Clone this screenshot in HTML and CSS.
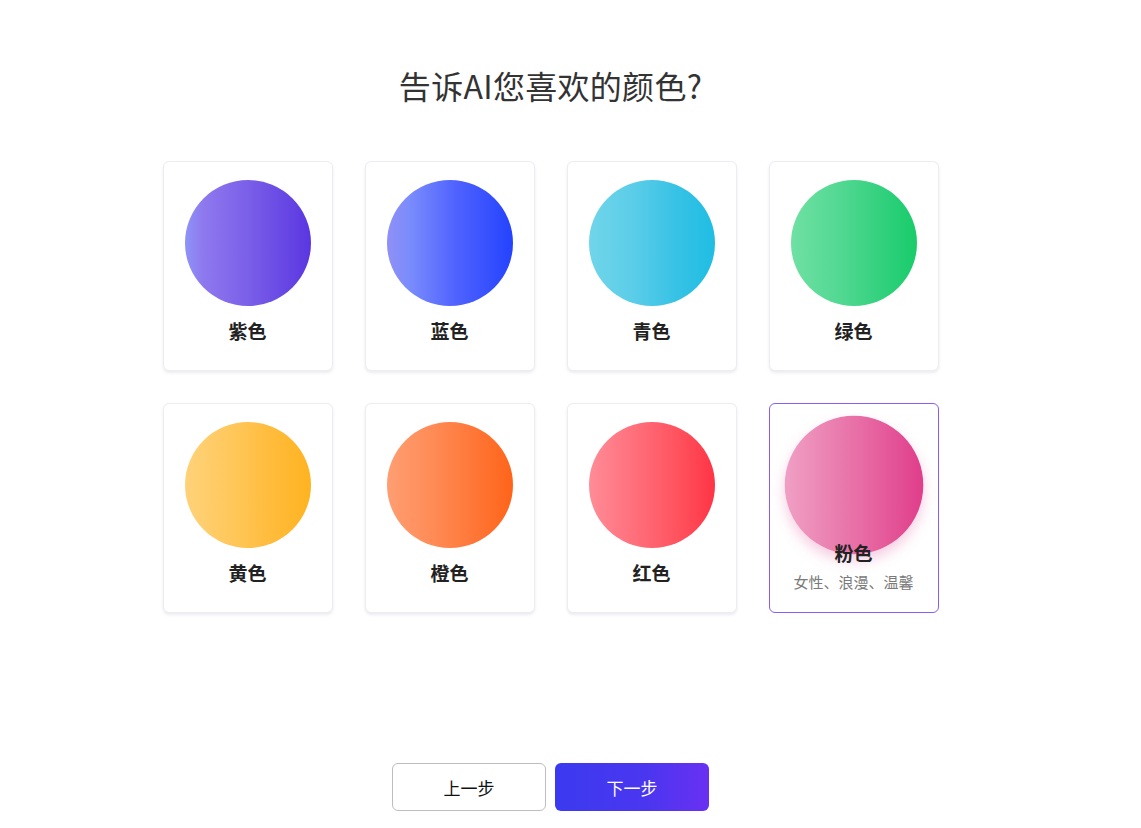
FILE: index.html
```html
<!DOCTYPE html>
<html lang="zh-CN">
<head>
<meta charset="utf-8">
<title>告诉AI您喜欢的颜色?</title>
<link rel="stylesheet" href="styles.css">
</head>
<body>
<div class="page">
  <h1 class="title">告诉AI您喜欢的颜色?</h1>
  <div class="grid">
    <div class="card"><div class="swatch purple"></div><div class="label">紫色</div></div>
    <div class="card"><div class="swatch blue"></div><div class="label">蓝色</div></div>
    <div class="card"><div class="swatch cyan"></div><div class="label">青色</div></div>
    <div class="card"><div class="swatch green"></div><div class="label">绿色</div></div>
    <div class="card"><div class="swatch yellow"></div><div class="label">黄色</div></div>
    <div class="card"><div class="swatch orange"></div><div class="label">橙色</div></div>
    <div class="card"><div class="swatch red"></div><div class="label">红色</div></div>
    <div class="card active"><div class="swatch pink"></div><div class="label">粉色</div><div class="desc">女性、浪漫、温馨</div></div>
  </div>
  <div class="actions">
    <button class="btn prev">上一步</button>
    <button class="btn next">下一步</button>
  </div>
</div>
</body>
</html>
```
FILE: styles.css
```css
* { box-sizing: border-box; }
html, body { margin: 0; padding: 0; background: #fff; }
body {
  font-family: "Noto Sans CJK SC", "Noto Sans", "Liberation Sans", sans-serif;
  color: #222;
}
.page {
  width: 1101px;
  display: flex;
  flex-direction: column;
  align-items: center;
}
.title {
  margin: 63px 0 0;
  font-size: 32px;
  line-height: 44px;
  font-weight: 400;
  color: #333;
  letter-spacing: 0.3px;
}
.grid {
  margin-top: 54px;
  display: grid;
  grid-template-columns: repeat(4, 170px);
  column-gap: 32px;
  row-gap: 32px;
}
.card {
  height: 210px;
  border: 1px solid #ececf2;
  border-radius: 6px;
  box-shadow: 0 2px 3px rgba(200, 200, 215, 0.35);
  background: #fff;
  display: flex;
  flex-direction: column;
  align-items: center;
  padding-top: 18px;
}
.swatch {
  width: 126px;
  height: 126px;
  border-radius: 50%;
  flex: none;
}
.label {
  margin-top: 12px;
  font-size: 19px;
  line-height: 26px;
  font-weight: 700;
  color: #222;
  position: relative;
  z-index: 1;
}
.desc {
  margin-top: 6px;
  font-size: 15px;
  line-height: 20px;
  color: #7a7a7a;
}
.card.active {
  border-color: #8a5cf0;
  box-shadow: none;
}
.card.active .swatch {
  transform: scale(1.1);
  box-shadow: 0 6px 12px rgba(225, 110, 170, 0.35);
}
.card.active .label { margin-top: -8px; }

.purple { background: linear-gradient(90deg, #8e93f8 0%, #8e78ee 15%, #7a5fe8 50%, #5a36e1 100%); }
.blue   { background: linear-gradient(90deg, #9090f6 0%, #7a8cfc 18%, #4f62fe 55%, #2443ff 100%); }
.cyan   { background: linear-gradient(90deg, #70d5ea 0%, #5bcde8 35%, #36c2e5 70%, #20bde3 100%); }
.green  { background: linear-gradient(90deg, #6fe0a3 0%, #55d994 35%, #34d17f 70%, #18cc6a 100%); }
.yellow { background: linear-gradient(90deg, #ffd279 0%, #ffc85d 35%, #ffbb3a 70%, #ffb320 100%); }
.orange { background: linear-gradient(90deg, #ff9e72 0%, #ff8c57 35%, #ff7636 70%, #ff6419 100%); }
.red    { background: linear-gradient(90deg, #ff8c97 0%, #ff707c 35%, #ff535f 70%, #ff3445 100%); }
.pink   { background: linear-gradient(90deg, #f0a0c4 0%, #ea7fb0 35%, #e6629f 65%, #e03d8a 100%); }

.actions {
  margin-top: 150px;
  display: flex;
  gap: 9px;
}
.btn {
  width: 154px;
  height: 48px;
  border-radius: 6px;
  font-family: "Noto Sans CJK SC", "Noto Sans", sans-serif;
  font-size: 17px;
  cursor: pointer;
}
.btn.prev {
  background: #fff;
  border: 1px solid #bdbdbd;
  color: #111;
}
.btn.next {
  border: none;
  color: #fff;
  background: linear-gradient(90deg, #3b3af0 0%, #4b36f0 60%, #6a30f2 100%);
}
```
